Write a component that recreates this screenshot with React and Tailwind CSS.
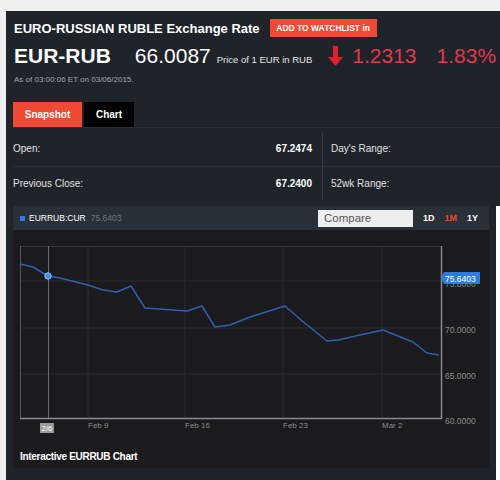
import React from 'react';

const points = [
  [7, 34], [20, 37], [35, 46], [47, 48], [75, 55], [90, 60], [104, 62], [118, 56],
  [132, 78], [174, 81], [189, 76], [202, 97], [217, 95], [237, 87], [272, 76],
  [288, 90], [314, 111], [325, 110], [347, 105], [370, 100], [400, 112], [414, 123], [426, 125],
];

function Chart() {
  const d = points.map(([x, y], i) => `${i ? 'L' : 'M'}${x} ${y}`).join(' ');
  return (
    <svg width="476" height="212" viewBox="0 0 476 212" className="block">
      {/* grid */}
      {[75, 172, 270, 369].map((x) => (
        <line key={x} x1={x} y1="16" x2={x} y2="188" stroke="#2c2c2e" strokeWidth="1" />
      ))}
      {[51, 98, 144].map((y) => (
        <line key={y} x1="7" y1={y} x2="428" y2={y} stroke="#2c2c2e" strokeWidth="1" />
      ))}
      <line x1="7" y1="16.5" x2="428" y2="16.5" stroke="#3a3a3c" />
      <line x1="7.5" y1="16" x2="7.5" y2="188" stroke="#5a5a5c" />
      <line x1="428.5" y1="16" x2="428.5" y2="189" stroke="#8a8a8c" strokeWidth="1.5" />
      <line x1="7" y1="188.5" x2="429" y2="188.5" stroke="#8a8a8c" strokeWidth="1.5" />
      <line x1="35.5" y1="16" x2="35.5" y2="188" stroke="#6a6a6c" />
      <path d={d} fill="none" stroke="#2f5fb3" strokeWidth="1.5" strokeLinejoin="round" />
      <circle cx="35" cy="46" r="3.2" fill="#3d8ef0" stroke="#9cc4f5" strokeWidth="1" />

      {/* y axis; the 75.0000 label sits partly under the price tag, as in the live widget */}
      <g fill="#8c8c8c" fontFamily="'Liberation Sans', Arial, sans-serif" fontSize="8.5">
        <text x="432" y="57">75.0000</text>
        <text x="432" y="103">70.0000</text>
        <text x="432" y="149">65.0000</text>
        <text x="432" y="194">60.0000</text>
      </g>
      <path d="M428 48 L431 42 L467 42 L467 54 L431 54 Z" fill="#2f7be6" />
      <text x="432" y="51.5" fill="#ffffff" fontFamily="'Liberation Sans', Arial, sans-serif" fontSize="8.5">75.6403</text>

      {/* x axis */}
      <g fill="#8c8c8c" fontFamily="'Liberation Sans', Arial, sans-serif" fontSize="8">
        <text x="75" y="198">Feb 9</text>
        <text x="172" y="198">Feb 16</text>
        <text x="270" y="198">Feb 23</text>
        <text x="369" y="198">Mar 2</text>
      </g>
      <rect x="27" y="193" width="14" height="10" fill="#9a9a9a" />
      <text x="34" y="201" textAnchor="middle" fill="#ffffff" fontFamily="'Liberation Sans', Arial, sans-serif" fontSize="7.5">2/6</text>
    </svg>
  );
}

export default function App() {
  return (
    <div className="h-[480px] w-[500px] overflow-hidden bg-[#efefef] pl-[6px] pt-[11px] font-['Liberation_Sans',Arial,sans-serif]">
      <div className="flex h-full flex-col bg-[#1f232a]">
        <div className="flex items-center pl-2 pt-[8px]">
          <h1 className="text-[13px] font-bold leading-none text-white">EURO-RUSSIAN RUBLE Exchange Rate</h1>
          <button type="button" className="ml-[10px] flex h-[18px] w-[107px] items-center justify-center bg-[#f04a35] text-[8.5px] font-bold text-white">
            ADD TO WATCHLIST in
          </button>
        </div>

        <div className="mt-[8px] flex items-baseline pl-2">
          <span className="text-[21px] font-bold leading-none text-white">EUR-RUB</span>
          <span className="ml-[24px] text-[21px] leading-none text-white">66.0087</span>
          <span className="ml-[6px] text-[9.5px] text-[#e4e4e4]">Price of 1 EUR in RUB</span>
          <svg width="17" height="22" viewBox="0 0 17 22" className="ml-[15px] self-center">
            <path d="M6 1 H11 V12 H16 L8.5 21 L1 12 H6 Z" fill="#e0202e" />
          </svg>
          <span className="ml-[8px] text-[21px] leading-none text-[#e0384e]">1.2313</span>
          <span className="ml-[20px] text-[21px] leading-none text-[#e0384e]">1.83%</span>
        </div>

        <p className="mt-[7px] pl-2 text-[8px] text-[#a8a8a8]">As of 03:00:06 ET on 03/06/2015.</p>

        <div className="ml-[7px] mt-[16px] flex gap-[2px]">
          <div className="flex h-[25px] w-[69px] items-center justify-center bg-[#f04a35] text-[10px] font-bold text-white">Snapshot</div>
          <div className="flex h-[25px] w-[50px] items-center justify-center bg-black text-[10px] font-bold text-white">Chart</div>
        </div>

        <div className="ml-[7px] border-t border-[#2c3138]">
          <div className="flex h-[39px] items-center border-b border-[#2c3138] pt-[3px] text-[10px]">
            <div className="flex w-[309px] items-center justify-between pr-[10px]">
              <span className="text-[#e2e2e2]">Open:</span>
              <span className="font-bold text-white">67.2474</span>
            </div>
            <div className="h-[33px] w-px self-end bg-[#3a3f47]" />
            <span className="pl-[8px] text-[#e2e2e2]">Day's Range:</span>
          </div>
          <div className="flex h-[39px] items-center pb-[6px] text-[10px]">
            <div className="flex w-[309px] items-center justify-between pr-[10px]">
              <span className="text-[#e2e2e2]">Previous Close:</span>
              <span className="font-bold text-white">67.2400</span>
            </div>
            <div className="h-[33px] w-px self-start bg-[#3a3f47]" />
            <span className="pl-[8px] text-[#e2e2e2]">52wk Range:</span>
          </div>
        </div>

        <div className="flex flex-1">
          <div className="ml-[7px] flex w-[476px] flex-col self-start">
            <div className="flex h-[24px] items-center bg-[#2a3038] pl-[7px] pr-[11px]">
              <span className="h-[5px] w-[5px] bg-[#2f7be6]" />
              <span className="ml-[4px] text-[8.5px] text-white">EURRUB:CUR</span>
              <span className="ml-[5px] text-[8.5px] text-[#6e747c]">75.6403</span>
              <div className="ml-auto flex h-[17px] w-[95px] items-center bg-[#eeeeee] pl-[6px] text-[11.5px] text-[#555]">Compare</div>
              <span className="ml-[10px] text-[9px] font-bold text-white">1D</span>
              <span className="ml-[10px] text-[9px] font-bold text-[#f0402f]">1M</span>
              <span className="ml-[10px] text-[9px] font-bold text-white">1Y</span>
            </div>
            <div className="h-[238px] bg-[#1b1a1c]">
              <Chart />
              <p className="pl-[7px] pt-[7px] text-[10px] font-bold tracking-[-0.3px] text-white">Interactive EURRUB Chart</p>
            </div>
          </div>
          <div className="ml-auto w-[4px] bg-white" />
        </div>
      </div>
    </div>
  );
}
